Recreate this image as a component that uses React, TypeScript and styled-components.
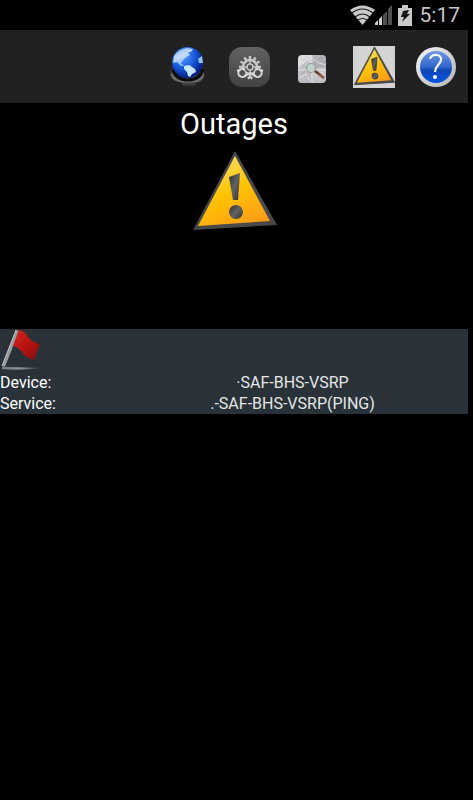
import React from "react";
import styled, { createGlobalStyle } from "styled-components";

const GlobalStyle = createGlobalStyle`
  * { box-sizing: border-box; }
  body { margin: 0; background: #000; color: #fff; font-family: Roboto, "Liberation Sans", sans-serif; }
`;

const Screen = styled.div`
  min-height: 100vh;
  padding-right: 5px;
  background: #000;
`;

const StatusBar = styled.header`
  display: flex;
  justify-content: flex-end;
  align-items: center;
  height: 30px;
  padding-right: 8px;
  color: #c4c4c4;
`;

const Clock = styled.time`
  margin-left: 8px;
  font-size: 21px;
  line-height: 30px;
`;

const Toolbar = styled.nav`
  display: flex;
  justify-content: flex-end;
  align-items: center;
  gap: 20px;
  height: 73px;
  padding-right: 11px;
  background: #212121;
`;

const ToolButton = styled.button<{ $active?: boolean }>`
  display: block;
  width: 42px;
  height: 42px;
  padding: 0;
  border: 0;
  background: ${(p) => (p.$active ? "#d4d4d4" : "transparent")};

  svg { display: block; }
`;

const Summary = styled.section`
  display: flex;
  flex-direction: column;
  align-items: center;
  height: 226px;
`;

const Title = styled.h1`
  margin: 0;
  font-size: 29px;
  font-weight: 400;
  line-height: 42px;
`;

const WarningHolder = styled.div`
  margin-top: 4px;

  svg { display: block; }
`;

const OutageCard = styled.article`
  background: #283238;

  > svg { display: block; }
`;

const Details = styled.dl`
  margin: 0;
  font-size: 16px;
  line-height: 21px;
`;

const DetailRow = styled.div`
  display: grid;
  grid-template-columns: 1fr 3fr;
`;

const Term = styled.dt`
  white-space: nowrap;
`;

const Value = styled.dd`
  margin: 0;
  text-align: center;
  white-space: nowrap;
  color: #e6e6e6;
`;

const Wifi = () => (
  <svg width="25" height="20" viewBox="0 0 25 20" aria-label="Wi-Fi">
    <path d="M0 5Q12.500-4 25 5L12.500 20Z" fill="#c9c9c9" />
    <path d="M2 8Q12.500 0 23 8M5 12Q12.500 6 20 12M8 15Q12.500 12 17 15" fill="none" stroke="#161616" strokeWidth="1.2" />
  </svg>
);

const Signal = () => (
  <svg width="17" height="20" viewBox="0 0 17 20" aria-label="Signal">
    <path d="M0 20V18L3 15V20Z M4 20V14L7 11V20Z" fill="#cecece" />
    <path d="M8 20V10L12 6V20Z M13 20V4L17 0V20Z" fill="#505050" />
  </svg>
);

const BatterySvg = styled.svg`
  margin-left: 6px;
`;

const Battery = () => (
  <BatterySvg width="14" height="21" viewBox="0 0 14 21" aria-label="Battery charging">
    <path d="M4 0H10V3H14V21H0V3H4Z" fill="#c9c9c9" />
    <path d="M5 6L11 5L9 9L12 9L4 17L6 12H3Z" fill="#141414" />
  </BatterySvg>
);

const Globe = () => (
  <svg width="42" height="42" viewBox="0 0 42 42">
    <defs>
      <radialGradient id="ocean" cx=".36" cy=".3" r=".75">
        <stop offset="0" stopColor="#5da0ff" />
        <stop offset=".5" stopColor="#185bdc" />
        <stop offset="1" stopColor="#001578" />
      </radialGradient>
      <linearGradient id="land" x2=".6" y2="1">
        <stop offset="0" stopColor="#8dbdff" />
        <stop offset=".5" stopColor="#dceaff" />
        <stop offset="1" stopColor="#85baff" />
      </linearGradient>
      <linearGradient id="stand" x2="0" y2="1">
        <stop offset="0" stopColor="#252525" />
        <stop offset=".6" stopColor="#606060" />
        <stop offset="1" stopColor="#333" />
      </linearGradient>
    </defs>
    <path d="M4 22Q2 31 8 35L15 37L16 40H27L29 37Q38 35 37 27V21Z" fill="url(#stand)" />
    <path d="M4 28Q7 36 20 36Q34 36 37 28" fill="none" stroke="#858585" strokeWidth="1" />
    <path d="M6 23Q9 34 21 34Q33 34 36 23" fill="none" stroke="#0b0b0b" strokeWidth="3" />
    <circle cx="20.500" cy="16.500" r="15.500" fill="url(#ocean)" />
    <path d="M7 10Q12 3 20 2L26 3L24 6L21 6L23 9L18 12L14 17L17 20L14 20L10 16L6 17Z" fill="url(#land)" opacity=".85" />
    <path d="M17 20L22 19L28 23L29 26L25 28L23 31L21 30L20 26L17 23Z" fill="#c6e5ff" />
    <path d="M35 10L31 13L32 17L36 17Z" fill="#8fc4ff" />
  </svg>
);

const teeth = Array.from({ length: 12 }, (_, i) => i * 30);

const Gears = () => (
  <svg width="42" height="42" viewBox="0 0 42 42">
    <defs>
      <linearGradient id="tile" x2="0" y2="1">
        <stop offset="0" stopColor="#626262" />
        <stop offset="1" stopColor="#414141" />
      </linearGradient>
    </defs>
    <rect x="0" y="1" width="41" height="40" rx="13" fill="url(#tile)" />
    <g transform="translate(21 21)" fill="none" stroke="#c8c8c8">
      <circle r="7" strokeWidth="2.500" />
      <circle r="3" strokeWidth="1.500" />
      <path d="M-7 0H-3M3 0H7M0-7V-3M0 3V7" strokeWidth="1.500" />
      {teeth.map((a) => (
        <path key={a} d="M0-8V-11" strokeWidth="2.500" transform={`rotate(${a})`} />
      ))}
    </g>
    <circle cx="13" cy="27" r="3" fill="#505050" />
    <circle cx="29" cy="27" r="3" fill="#505050" />
    <g fill="none" stroke="#d8d8d8" strokeWidth="2">
      <path d="M16 24A4 4 0 1 0 16 30L21 27" />
      <path d="M26 24A4 4 0 1 1 26 30L21 27" />
      <path d="M10 24L8 25M32 24L34 25M19 31L20 33M23 31L22 33" />
    </g>
  </svg>
);

const MapSearch = () => (
  <svg width="42" height="42" viewBox="0 0 42 42">
    <defs>
      <linearGradient id="paper" x2="1" y2="1">
        <stop offset="0" stopColor="#e0e0e3" />
        <stop offset="1" stopColor="#bcbcc1" />
      </linearGradient>
      <clipPath id="mapEdge"><rect x="7" y="9" width="28" height="28" rx="4" /></clipPath>
    </defs>
    <g clipPath="url(#mapEdge)">
      <path d="M7 9H35V37H7Z" fill="url(#paper)" />
      <path d="M21 9H35V21L21 23Z" fill="#929299" opacity=".5" />
      <path d="M7 22L14 17L20 27V37H7Z" fill="#a5a5ae" opacity=".4" />
      <path d="M21 9V37M7 24H35M7 17L15 16L20 9M22 13L28 17L35 19M8 32L15 28L19 35M24 30L31 26L35 33" fill="none" stroke="#e8e8ec" strokeWidth="1" opacity=".8" />
      <path d="M11 21L16 15L19 21M23 18L30 11L33 16M10 29L14 24M26 25L32 30" fill="none" stroke="#96969e" strokeWidth="1" opacity=".5" />
    </g>
    <circle cx="20" cy="22" r="4.500" fill="#c5cfcc" stroke="#8e9c98" strokeWidth="1.200" />
    <path d="M24 25L33 32" stroke="#65412e" strokeWidth="2.500" />
    <path d="M28 28L33 32" stroke="#a96a42" strokeWidth="1.200" />
  </svg>
);

const Warning = ({ size, id, edge = 0 }: { size: number; id: string; edge?: number }) => (
  <svg width={size} height={size} viewBox="0 0 88 88" aria-hidden="true">
    <defs>
      <linearGradient id={`${id}Face`} x1=".2" y1="0" x2=".7" y2="1">
        <stop offset="0" stopColor="#ffe17a" />
        <stop offset=".5" stopColor="#ffc400" />
        <stop offset="1" stopColor="#ff9d18" />
      </linearGradient>
      <linearGradient id={`${id}Mark`} x2="1" y2="1">
        <stop offset="0" stopColor="#303030" />
        <stop offset=".5" stopColor="#626262" />
        <stop offset="1" stopColor="#303030" />
      </linearGradient>
    </defs>
    <path d="M45 2L87 76L3 81Z" fill="#494949" stroke="#494949" strokeWidth={edge} />
    <path d="M45 7L80 72L8 77Z" fill={`url(#${id}Face)`} />
    <path d="M39 28L50 24L48 51H43Z" fill={`url(#${id}Mark)`} stroke="#404040" strokeWidth={edge} />
    <circle cx="46" cy="63" r="7" fill={`url(#${id}Mark)`} />
  </svg>
);

const Help = () => (
  <svg width="42" height="42" viewBox="0 0 42 42">
    <defs>
      <linearGradient id="rim" x2="1" y2="1">
        <stop offset="0" stopColor="#f5f5f5" />
        <stop offset="1" stopColor="#b4b4b4" />
      </linearGradient>
      <linearGradient id="helpBlue" x2="0" y2="1">
        <stop offset="0" stopColor="#6c98e5" />
        <stop offset=".5" stopColor="#3266ca" />
        <stop offset=".6" stopColor="#0d45b3" />
        <stop offset="1" stopColor="#0755e8" />
      </linearGradient>
    </defs>
    <circle cx="21" cy="21" r="20" fill="url(#rim)" />
    <circle cx="21" cy="21" r="16" fill="url(#helpBlue)" />
    <path d="M15 13C17 7 27 8 26 14C25 19 20 20 20 26" fill="none" stroke="#f5f5f5" strokeWidth="2.200" />
    <circle cx="20" cy="31" r="2" fill="#fff" />
  </svg>
);

const Flag = () => (
  <svg width="42" height="43" viewBox="0 0 42 43" aria-label="Outage flag">
    <defs>
      <linearGradient id="cloth" x2="1" y2="1">
        <stop offset="0" stopColor="#d52521" />
        <stop offset=".5" stopColor="#b61412" />
        <stop offset="1" stopColor="#840b0b" />
      </linearGradient>
      <linearGradient id="shade">
        <stop offset="0" stopColor="#7c8386" />
        <stop offset=".5" stopColor="#8c9294" />
        <stop offset="1" stopColor="#3a4449" />
      </linearGradient>
    </defs>
    <path d="M2 38Q20 38 40 39Q20 42 2 40Z" fill="url(#shade)" />
    <path d="M16 1L19 2L5 38L2 37Z" fill="#979b9d" />
    <path d="M16 1L2 37" stroke="#c4c4c4" strokeWidth="1" />
    <path d="M19 1Q25 2 28 8Q32 13 40 15L34 31Q26 29 22 23Q18 18 13 17Z" fill="url(#cloth)" />
  </svg>
);

export default function App() {
  return (
    <Screen>
      <GlobalStyle />
      <StatusBar>
        <Wifi />
        <Signal />
        <Battery />
        <Clock>5:17</Clock>
      </StatusBar>
      <Toolbar aria-label="Main">
        <ToolButton type="button" aria-label="Network"><Globe /></ToolButton>
        <ToolButton type="button" aria-label="Settings"><Gears /></ToolButton>
        <ToolButton type="button" aria-label="Map"><MapSearch /></ToolButton>
        <ToolButton type="button" aria-label="Outages" $active><Warning size={42} id="small" edge={2} /></ToolButton>
        <ToolButton type="button" aria-label="Help"><Help /></ToolButton>
      </Toolbar>
      <main>
        <Summary>
          <Title>Outages</Title>
          <WarningHolder><Warning size={88} id="large" /></WarningHolder>
        </Summary>
        <OutageCard>
          <Flag />
          <Details>
            <DetailRow><Term>Device:</Term><Value>·SAF-BHS-VSRP</Value></DetailRow>
            <DetailRow><Term>Service:</Term><Value>.-SAF-BHS-VSRP(PING)</Value></DetailRow>
          </Details>
        </OutageCard>
      </main>
    </Screen>
  );
}
